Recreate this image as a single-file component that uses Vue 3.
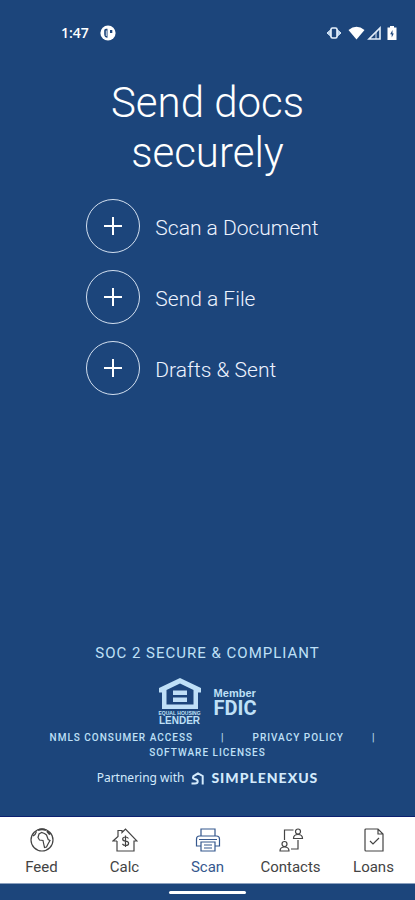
<script setup>
const actions = ['Scan a Document', 'Send a File', 'Drafts & Sent']
</script>

<template>
  <div class="screen">
    <header class="status">
      <div class="status-side">
        <span class="time">1:47</span>
        <svg class="app-dot" viewBox="0 0 16 16" aria-hidden="true">
          <circle cx="8" cy="8" r="7.6" fill="#fff" />
          <path d="M7.500 12.700Q4.200 12.500 4.200 9V5.500Q4.200 3.800 6 3.800h1.500zM10 5h2.300v3H10z" fill="#1c457b" />
          <path d="M6.300 5.500v5.500" stroke="#fff" stroke-width=".8" />
        </svg>
      </div>
      <div class="status-side right">
        <svg class="ic-vibrate" viewBox="0 0 16 12" aria-hidden="true">
          <path d="M5 2.500 1 6l4 3.500M11 2.500 15 6l-4 3.500" fill="#b9d3ee" stroke="#d8e8f8" />
          <rect x="5" y="1" width="6" height="10" rx="1.500" fill="#1c457b" stroke="#e6f1fc" stroke-width="1.600" />
        </svg>
        <svg class="ic-wifi" viewBox="0 0 17 14" aria-hidden="true">
          <path d="M.5 4Q8.500-2.500 16.500 4L8.500 13.500z" fill="#fff" />
        </svg>
        <svg class="ic-signal" viewBox="0 0 14 14" aria-hidden="true">
          <path d="M2 13H13V2z" fill="none" stroke="#e2edf9" stroke-width="1.600" />
          <path d="M9 6v7" stroke="#e2edf9" />
        </svg>
        <svg class="ic-battery" viewBox="0 0 10 14" aria-hidden="true">
          <path d="M3 0h4v1.500h2.500V14H.5V1.500H3z" fill="#fff" />
          <path d="M5.500 4 3.200 8.200h1.500V11.500L6.800 7.400H5.500z" fill="#1c457b" />
        </svg>
      </div>
    </header>

    <main class="main">
      <h1 class="title">Send docs<br />securely</h1>
      <div class="actions">
        <button v-for="label in actions" :key="label" class="action" type="button">
          <span class="ring">
            <svg viewBox="0 0 18 18" aria-hidden="true">
              <path d="M9 0v18M0 9h18" stroke="#fff" stroke-width="2" />
            </svg>
          </span>
          <span class="action-label">{{ label }}</span>
        </button>
      </div>
    </main>

    <footer class="legal">
      <p class="soc">SOC 2 SECURE &amp; COMPLIANT</p>
      <div class="badges">
        <div class="lender">
          <svg class="house" viewBox="0 0 42 31" aria-hidden="true">
            <path d="M21 0 0 10v4.500h3V31h36V14.500h3V10zM21 5.500l13.500 6.500v14.500h-27V12z" fill="#bfe0f7" fill-rule="evenodd" />
            <path d="M14 12.500h14V17H14zM14 19.500h14V24H14z" fill="#bfe0f7" />
          </svg>
          <span class="equal">EQUAL HOUSING</span>
          <span class="lender-word">LENDER</span>
        </div>
        <div class="fdic">
          <span class="member">Member</span>
          <span class="fdic-word">FDIC</span>
        </div>
      </div>
      <nav class="links" aria-label="Legal">
        <div class="links-row">
          <a href="#nmls">NMLS CONSUMER ACCESS</a>
          <span>|</span>
          <a href="#privacy">PRIVACY POLICY</a>
          <span>|</span>
        </div>
        <a href="#licenses">SOFTWARE LICENSES</a>
      </nav>
      <div class="partner">
        <span class="with">Partnering with</span>
        <svg class="sn" viewBox="0 0 13 13" aria-hidden="true">
          <path d="M.5 11.500h3.500q2.700 0 2.700-2T4.300 7.200 2 5.300 4 3.200L7 1.300 11.700 4v8.500" fill="none" stroke="#d3eafc" stroke-width="2" />
        </svg>
        <span class="brand">SIMPLENEXUS</span>
      </div>
    </footer>

    <nav class="tabs" aria-label="Main">
      <a class="tab" href="#feed">
        <svg viewBox="0 0 26 26" aria-hidden="true">
          <circle cx="13" cy="13" r="11" />
          <path d="M12.500 5.500 10 7l-1 3.500 1.500 2.500 3.500.5.500 2.500 1 4.500 2-.5 1.500-3 2-3.500-1.800-1-1.700-4.500-2-1.500zM4 9l2-1.500 1.500-3" />
          <path d="M9 3.200q4-1.700 8 0M18 4l3 3.500" stroke-width="2" />
        </svg>
        <span>Feed</span>
      </a>
      <a class="tab" href="#calc">
        <svg viewBox="0 0 26 26" aria-hidden="true">
          <path d="M5 14v10h17V14h3L13.500 2 10 5.500V3.500H6V9.500L1 14h4" />
          <path d="M16.500 11.500q-1-1.500-3-1.500-2.800 0-2.800 2t2.900 2.200q3 .3 3 2.300t-3 2q-2.200 0-3.200-1.600M13.500 8.500V20" />
        </svg>
        <span>Calc</span>
      </a>
      <a class="tab active" href="#scan" aria-current="page">
        <svg viewBox="0 0 26 26" aria-hidden="true">
          <path d="M6 9V2h14v7M6 19H1.500V12q0-3 3-3h17q3 0 3 3v7H20M6 15h14v9H6zM4 12.500h18M9 18h8M9 21h8" />
        </svg>
        <span>Scan</span>
      </a>
      <a class="tab" href="#contacts">
        <svg viewBox="0 0 26 26" aria-hidden="true">
          <path d="M6.500 13V3h9M20 13v9h-7" />
          <circle cx="20" cy="4.500" r="2.500" />
          <path d="M15.500 11.500q0-4 4.500-4t4.500 4z" />
          <circle cx="6.500" cy="17" r="2.500" />
          <path d="M2 24q0-4 4.500-4t4.500 4z" />
        </svg>
        <span>Contacts</span>
      </a>
      <a class="tab" href="#loans">
        <svg viewBox="0 0 26 26" aria-hidden="true">
          <path d="M5 2h12l5 5v17H5q-1 0-1-1V3q0-1 1-1zM17 2v5h5M9 14l3 3 6-6" />
        </svg>
        <span>Loans</span>
      </a>
    </nav>
    <div class="gesture"><span></span></div>
  </div>
</template>

<style>
body {
  background: #1c457b;
}
</style>

<style scoped>
.screen {
  min-height: 100vh;
  display: flex;
  flex-direction: column;
  background: #1c457b;
  color: #fff;
  font-family: Roboto, sans-serif;
}
.screen * {
  box-sizing: border-box;
}
a {
  color: inherit;
  text-decoration: none;
}
svg {
  display: block;
}
.status {
  display: flex;
  justify-content: space-between;
  padding: 24px 18px 0 61px;
  height: 42px;
}
.status-side {
  display: flex;
  align-items: center;
  gap: 11px;
}
.right {
  gap: 2px;
}
.time {
  font: 600 14px/18px "Open Sans", sans-serif;
}
.app-dot {
  width: 16px;
  height: 16px;
}
.ic-vibrate {
  width: 16px;
  height: 12px;
  margin-right: 4px;
}
.ic-wifi {
  width: 17px;
  height: 14px;
}
.ic-signal {
  width: 14px;
  height: 14px;
}
.ic-battery {
  width: 10px;
  height: 14px;
  margin-left: 4px;
}
.title {
  margin: 36px 0 0;
  text-align: center;
  font-size: 42px;
  line-height: 50px;
  font-weight: 300;
}
.actions {
  display: flex;
  flex-direction: column;
  align-items: flex-start;
  gap: 17px;
  width: fit-content;
  margin: 21px auto 0;
  padding-right: 10px;
}
.action {
  display: flex;
  align-items: center;
  gap: 15px;
  padding: 0;
  border: 0;
  background: none;
  color: #eef3ff;
  font: 300 21px/26px Roboto, sans-serif;
  cursor: pointer;
}
.action-label {
  padding-top: 4px;
}
.ring {
  display: flex;
  align-items: center;
  justify-content: center;
  width: 54px;
  height: 54px;
  border: 1px solid #d3e0f0;
  border-radius: 50%;
}
.ring svg {
  width: 18px;
  height: 18px;
}
.legal {
  margin-top: auto;
  padding-bottom: 29px;
  color: #bfe0f7;
  text-align: center;
}
.soc {
  margin: 0;
  font-size: 15px;
  line-height: 18px;
  letter-spacing: 1px;
}
.badges {
  display: flex;
  justify-content: center;
  gap: 13px;
  margin-top: 16px;
}
.lender {
  display: flex;
  flex-direction: column;
  align-items: center;
}
.house {
  width: 42px;
  height: 31px;
}
.equal {
  margin-top: 2px;
  font: 700 5px/5px "Liberation Sans", sans-serif;
}
.lender-word {
  font: 700 10px/10px "Liberation Sans", sans-serif;
}
.fdic {
  display: flex;
  flex-direction: column;
  align-items: flex-start;
  padding-top: 9px;
  font-weight: 700;
}
.member {
  font-family: "Liberation Sans", sans-serif;
  font-size: 11px;
  line-height: 12px;
}
.fdic-word {
  font-size: 20px;
  line-height: 18px;
}
.links {
  margin-top: 4px;
  font-size: 10px;
  line-height: 15px;
  font-weight: 500;
  letter-spacing: 1px;
}
.links-row {
  display: flex;
  justify-content: center;
  gap: 28px;
  padding-left: 10px;
}
.partner {
  display: flex;
  align-items: center;
  justify-content: center;
  gap: 7px;
  margin-top: 9px;
  color: #d3eafc;
}
.with {
  font: 12px/18px "Noto Sans", sans-serif;
}
.sn {
  width: 13px;
  height: 13px;
}
.brand {
  font: 900 14px/18px Lato, sans-serif;
  letter-spacing: 1px;
}
.tabs {
  display: grid;
  grid-template-columns: repeat(5, 1fr);
  background: #fff;
  border-top: 1px solid #0b2070;
  border-bottom: 1px solid #8ba0be;
  color: #444;
}
.tab {
  display: flex;
  flex-direction: column;
  align-items: center;
  gap: 5px;
  padding: 10px 0 7px;
  font-size: 15px;
  line-height: 18px;
  font-weight: 400;
}
.tab svg {
  width: 26px;
  height: 26px;
  fill: none;
  stroke: currentColor;
  stroke-width: 1.2;
}
.active {
  color: #35588e;
}
.gesture {
  display: flex;
  justify-content: center;
  padding: 7px 0 6px;
}
.gesture span {
  width: 77px;
  height: 3px;
  border-radius: 2px;
  background: #fff;
}
</style>
